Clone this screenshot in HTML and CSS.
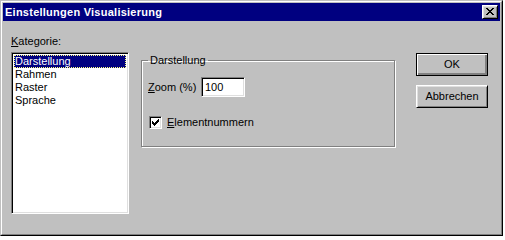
FILE: index.html
```html
<!DOCTYPE html>
<html lang="de">
<head>
<meta charset="utf-8">
<title>Einstellungen Visualisierung</title>
<link rel="stylesheet" href="styles.css">
</head>
<body>
<div class="window">
  <div class="frame">
    <div class="titlebar">
      <span class="title">Einstellungen Visualisierung</span>
      <button class="close" aria-label="Schließen">
        <svg width="8" height="7" viewBox="0 0 8 7" shape-rendering="crispEdges"><path fill="#000" d="M0 0h2v1H0zM6 0h2v1H6zM1 1h2v1H1zM5 1h2v1H5zM2 2h4v1H2zM3 3h2v1H3zM2 4h4v1H2zM1 5h2v1H1zM5 5h2v1H5zM0 6h2v1H0zM6 6h2v1H6z"/></svg>
      </button>
    </div>
    <div class="client">
      <div class="category">
        <div class="label"><u>K</u>ategorie:</div>
        <ul class="listbox">
          <li class="item selected">Darstellung</li>
          <li class="item">Rahmen</li>
          <li class="item">Raster</li>
          <li class="item">Sprache</li>
        </ul>
      </div>
      <fieldset class="group">
        <legend class="group-title">Darstellung</legend>
        <div class="zoom-row">
          <span class="zoom-label"><u>Z</u>oom (%)</span>
          <div class="edit">100</div>
        </div>
        <div class="check-row">
          <span class="checkbox"><svg width="7" height="7" viewBox="0 0 7 7" shape-rendering="crispEdges"><path fill="#000" d="M6 0h1v1H6zM5 1h2v1H5zM0 2h1v1H0zM4 2h3v1H4zM0 3h2v1H0zM3 3h3v1H3zM0 4h5v1H0zM1 5h3v1H1zM2 6h1v1H2z"/></svg></span>
          <span class="check-label"><u>E</u>lementnummern</span>
        </div>
      </fieldset>
      <div class="buttons">
        <button class="btn default">OK</button>
        <button class="btn">Abbrechen</button>
      </div>
    </div>
  </div>
</div>
</body>
</html>
```

FILE: styles.css
```css
* { box-sizing: border-box; }

html, body {
  margin: 0;
  padding: 0;
  background: #ffffff;
}

body {
  font-family: "Liberation Sans", Arial, sans-serif;
  font-size: 11px;
  line-height: 13px;
  color: #000;
}

.window {
  width: 503px;
  height: 236px;
  border: 1px solid;
  border-color: #c0c0c0 #000 #000 #c0c0c0;
  background: #c0c0c0;
}

.frame {
  height: 100%;
  border: 1px solid;
  border-color: #fff #808080 #808080 #fff;
  padding: 1px;
  display: flex;
  flex-direction: column;
}

.titlebar {
  height: 18px;
  background: #000080;
  display: flex;
  align-items: center;
  justify-content: space-between;
  padding: 0 2px 0 2px;
}

.title {
  color: #fff;
  font-weight: bold;
  letter-spacing: 0.25px;
  line-height: 18px;
}

.close {
  width: 16px;
  height: 14px;
  padding: 0;
  margin: 0;
  border: 1px solid;
  border-color: #fff #000 #000 #fff;
  box-shadow: inset 1px 1px #dfdfdf, inset -1px -1px #808080;
  background: #c0c0c0;
  display: flex;
  align-items: center;
  justify-content: center;
}

.close svg { display: block; margin: 0 0 1px 0; }

.client {
  flex: 1;
  display: flex;
  align-items: flex-start;
  padding: 14px 12px 0 8px;
}

.category {
  width: 118px;
  display: flex;
  flex-direction: column;
}

.label {
  height: 13px;
  margin-bottom: 4px;
}

.listbox {
  list-style: none;
  margin: 0;
  width: 118px;
  height: 162px;
  padding: 2px;
  background: #fff;
  border: 1px solid;
  border-color: #808080 #fff #fff #808080;
  box-shadow: inset 1px 1px #000, inset -1px -1px #dfdfdf;
}

.item {
  height: 13px;
  padding-left: 1px;
  white-space: nowrap;
}

.item.selected {
  background: #000080;
  color: #fff;
  outline: 1px dotted #ffff80;
  outline-offset: -1px;
}

.group {
  margin: 19px 0 0 12px;
  width: 254px;
  min-width: 0;
  padding: 10px 6px 17px 6px;
  border: 1px solid #808080;
  box-shadow: inset 1px 1px #fff, 1px 1px #fff;
}

.group-title {
  padding: 0 2px;
  margin: 0;
}

.zoom-row {
  display: flex;
  align-items: center;
  height: 20px;
}

.zoom-label {
  width: 53px;
}

.edit {
  width: 44px;
  height: 20px;
  background: #fff;
  border: 1px solid;
  border-color: #808080 #fff #fff #808080;
  box-shadow: inset 1px 1px #000, inset -1px -1px #dfdfdf;
  padding: 3px 0 0 3px;
  line-height: 13px;
}

.check-row {
  display: flex;
  align-items: center;
  margin-top: 19px;
  height: 13px;
}

.checkbox {
  width: 13px;
  height: 13px;
  margin-left: 1px;
  margin-right: 5px;
  background: #fff;
  border: 1px solid;
  border-color: #808080 #fff #fff #808080;
  box-shadow: inset 1px 1px #000, inset -1px -1px #dfdfdf;
  display: flex;
  align-items: center;
  justify-content: center;
}

.checkbox svg { display: block; }

.buttons {
  margin: 18px 0 0 auto;
  display: flex;
  flex-direction: column;
  gap: 9px;
}

.btn {
  width: 72px;
  height: 23px;
  padding: 0;
  margin: 0;
  font: inherit;
  color: #000;
  background: #c0c0c0;
  border: 1px solid;
  border-color: #fff #000 #000 #fff;
  box-shadow: inset 1px 1px #dfdfdf, inset -1px -1px #808080;
}

.btn.default {
  border-color: #000;
  box-shadow: inset 1px 1px #fff, inset -1px -1px #808080, inset -2px -2px #808080;
}
```
